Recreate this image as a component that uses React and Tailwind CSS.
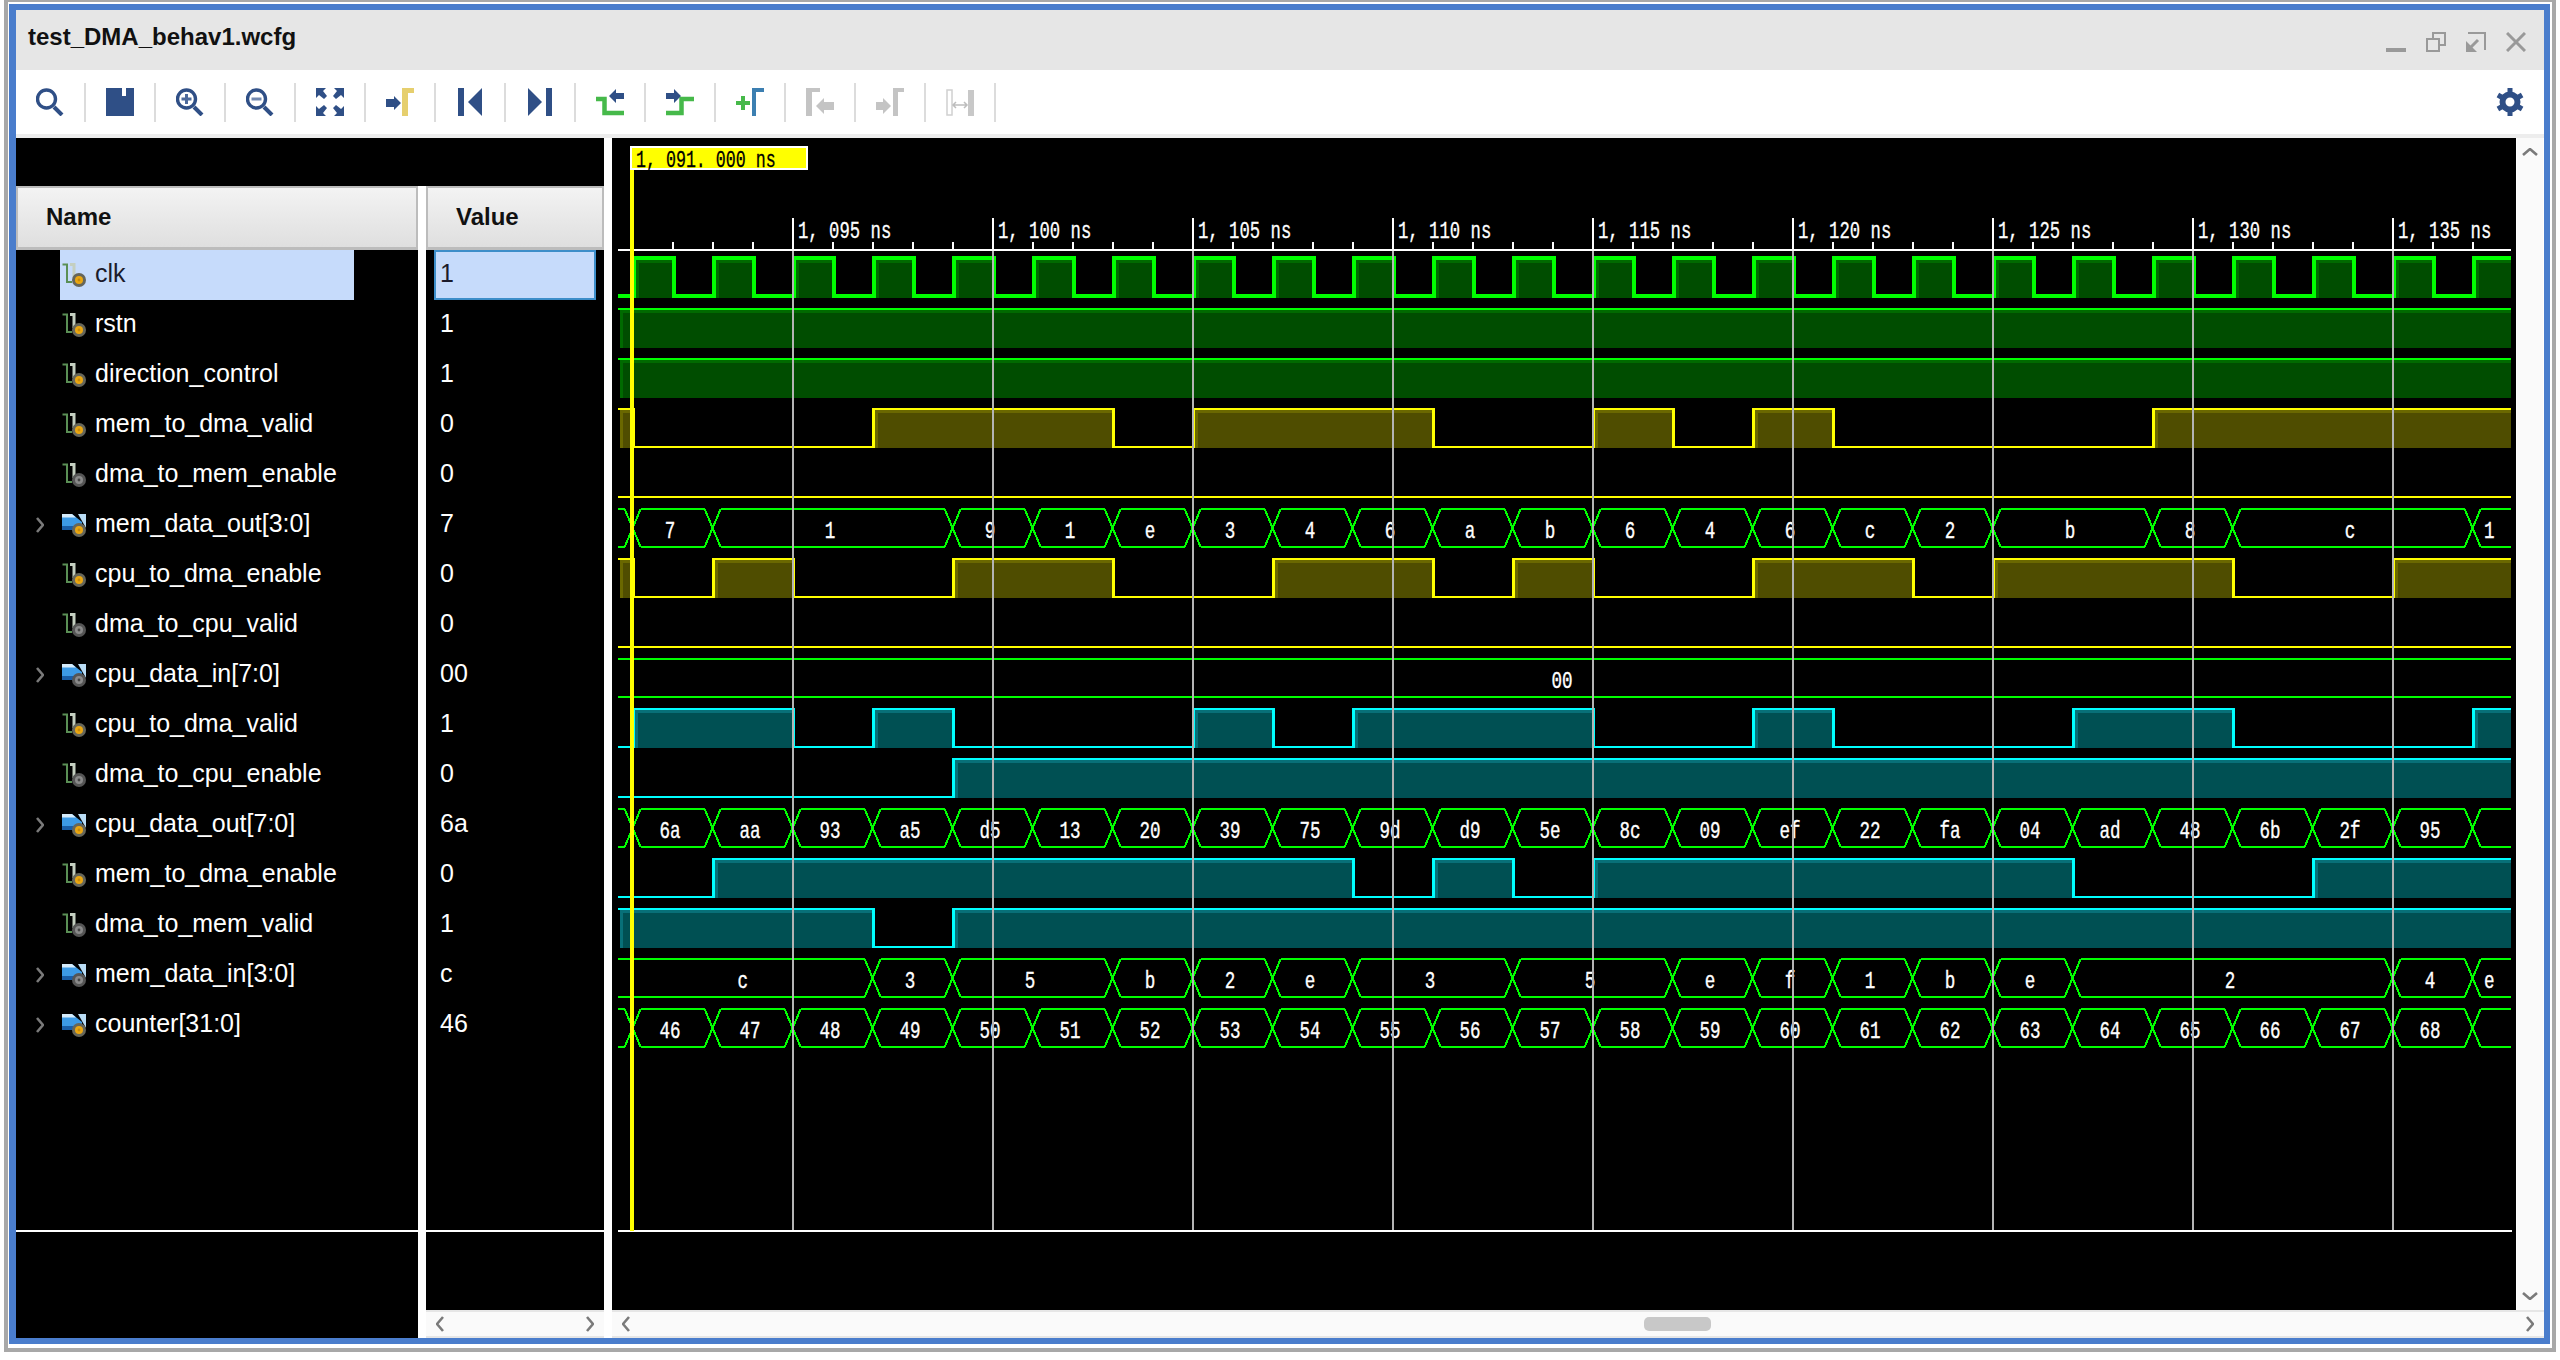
import React from "react";

const SIGNALS = [
  { name: "clk", value: "1", selected: true },
  { name: "rstn", value: "1" },
  { name: "direction_control", value: "1" },
  { name: "mem_to_dma_valid", value: "0" },
  { name: "dma_to_mem_enable", value: "0", dim: true },
  { name: "mem_data_out[3:0]", value: "7", bus: true },
  { name: "cpu_to_dma_enable", value: "0" },
  { name: "dma_to_cpu_valid", value: "0", dim: true },
  { name: "cpu_data_in[7:0]", value: "00", bus: true, dim: true },
  { name: "cpu_to_dma_valid", value: "1" },
  { name: "dma_to_cpu_enable", value: "0", dim: true },
  { name: "cpu_data_out[7:0]", value: "6a", bus: true },
  { name: "mem_to_dma_enable", value: "0" },
  { name: "dma_to_mem_valid", value: "1", dim: true },
  { name: "mem_data_in[3:0]", value: "c", bus: true, dim: true },
  { name: "counter[31:0]", value: "46", bus: true },
];

const GREEN = { line: "#00ff00", fill: "#004d00", band: "#006a00" };
const YELLOW = { line: "#ffff00", fill: "#4f4d00", band: "#6a6800" };
const TEAL = { line: "#00ffff", fill: "#005053", band: "#087078" };

const clkEdges = [];
for (let k = 0; k <= 46; k++) clkEdges.push(k / 2);

const WAVES = [
  { color: GREEN, high: false, edges: clkEdges, thick: true },
  { color: GREEN, high: true, edges: [] },
  { color: GREEN, high: true, edges: [] },
  { color: YELLOW, high: true, edges: [0, 3, 6, 7, 10, 12, 13, 14, 15, 19] },
  { color: YELLOW, high: false, edges: [] },
  {
    bus: true,
    init: "",
    edges: [0, 1, 4, 5, 6, 7, 8, 9, 10, 11, 12, 13, 14, 15, 16, 17, 19, 20, 23],
    labels: ["7", "1", "9", "1", "e", "3", "4", "6", "a", "b", "6", "4", "6", "c", "2", "b", "8", "c", "1"],
  },
  { color: YELLOW, high: true, edges: [0, 1, 2, 4, 6, 8, 10, 11, 12, 14, 16, 17, 20, 22] },
  { color: YELLOW, high: false, edges: [] },
  { bus: true, init: "00", edges: [], labels: [] },
  { color: TEAL, high: false, edges: [0, 2, 3, 4, 7, 8, 9, 12, 14, 15, 18, 20, 23] },
  { color: TEAL, high: false, edges: [4] },
  {
    bus: true,
    init: "",
    edges: [0, 1, 2, 3, 4, 5, 6, 7, 8, 9, 10, 11, 12, 13, 14, 15, 16, 17, 18, 19, 20, 21, 22, 23],
    labels: ["6a", "aa", "93", "a5", "d5", "13", "20", "39", "75", "9d", "d9", "5e", "8c", "09", "ef", "22", "fa", "04", "ad", "48", "6b", "2f", "95", ""],
  },
  { color: TEAL, high: false, edges: [1, 9, 10, 11, 12, 18, 21] },
  { color: TEAL, high: true, edges: [3, 4] },
  {
    bus: true,
    init: "c",
    edges: [3, 4, 6, 7, 8, 9, 11, 13, 14, 15, 16, 17, 18, 22, 23],
    labels: ["3", "5", "b", "2", "e", "3", "5", "e", "f", "1", "b", "e", "2", "4", "e"],
  },
  {
    bus: true,
    init: "",
    edges: [0, 1, 2, 3, 4, 5, 6, 7, 8, 9, 10, 11, 12, 13, 14, 15, 16, 17, 18, 19, 20, 21, 22, 23],
    labels: ["46", "47", "48", "49", "50", "51", "52", "53", "54", "55", "56", "57", "58", "59", "60", "61", "62", "63", "64", "65", "66", "67", "68", ""],
  },
];

const X_START = 618;
const X_END = 2511;
const MAJOR = [0, 1, 2, 3, 4, 5, 6, 7, 8].map((n) => 792 + n * 200);

function DigitalWave({ row, wave }) {
  const { color, edges, thick } = wave;
  const h = thick ? 4 : 2;
  const v = thick ? 4 : 3;
  const top = thick ? 256 : 258 + row * 50;
  const low = thick ? 294 : 296 + row * 50;
  const bottom = low + h;
  const xs = [X_START, ...edges.map((k) => 632 + k * 80), X_END];
  const parts = [];
  let high = wave.high;
  for (let i = 0; i < xs.length - 1; i++) {
    const x0 = xs[i];
    const x1 = xs[i + 1];
    if (high) {
      const start = i === 0 ? x0 + 2 : x0 + v;
      parts.push(<rect key={`f${i}`} x={start} y={top + h} width={Math.max(x1 - start, 0)} height={bottom - top - h} fill={color.fill} />);
      parts.push(<rect key={`b${i}`} x={start} y={top + h} width={Math.max(x1 - start, 0)} height={3} fill={color.band} />);
      parts.push(<rect key={`l${i}`} x={start} y={top + h} width={3} height={bottom - top - h} fill={color.band} />);
    }
    parts.push(<rect key={`h${i}`} x={x0} y={high ? top : low} width={x1 - x0} height={h} fill={color.line} />);
    if (i < xs.length - 2) {
      parts.push(<rect key={`v${i}`} x={x1} y={top} width={v} height={bottom - top} fill={color.line} />);
    }
    high = !high;
  }
  return <g>{parts}</g>;
}

function BusWave({ row, wave }) {
  const top = 259 + row * 50;
  const bot = 297 + row * 50;
  const xs = wave.edges.map((k) => 632.6 + k * 80);
  let d = "";
  let cursor = X_START;
  xs.forEach((xc) => {
    d += `M${cursor} ${top}H${xc - 8}L${xc + 8} ${bot}M${cursor} ${bot}H${xc - 8}L${xc + 8} ${top}`;
    cursor = xc + 8;
  });
  d += `M${cursor} ${top}H${X_END}M${cursor} ${bot}H${X_END}`;
  const bounds = [X_START, ...xs, X_END];
  const labels = [wave.init, ...wave.labels];
  return (
    <g>
      <path d={d} fill="none" stroke="#00ff00" strokeWidth="2" shapeRendering="crispEdges" />
      {labels.map((label, i) =>
        label ? (
          <text key={i} transform={`translate(${(bounds[i] + bounds[i + 1]) / 2 - 2.5},${288 + row * 50}) scale(1.1,1.5)`} textAnchor="middle" fill="#fff" stroke="#fff" strokeWidth="0.25">
            {label}
          </text>
        ) : null
      )}
    </g>
  );
}

function Waveform() {
  const minors = [];
  for (let x = 672; x < X_END; x += 40) {
    if (!MAJOR.includes(x)) minors.push(x);
  }
  return (
    <svg viewBox="612 138 1904 1172" className="w-[1904px] h-[1172px] block font-['Liberation_Mono'] text-[16px]">
      {WAVES.map((w, i) => (w.bus ? <BusWave key={i} row={i} wave={w} /> : <DigitalWave key={i} row={i} wave={w} />))}
      {/* ruler */}
      <rect x={X_START} y="249" width={X_END - X_START} height="2" fill="#fff" />
      {minors.map((x) => (
        <rect key={x} x={x} y="242" width="2" height="8" fill="#fff" />
      ))}
      {MAJOR.map((x, n) => (
        <g key={x}>
          <rect x={x} y="218" width="2" height="32" fill="#fff" />
          <rect x={x} y="251" width="2" height="980" fill="#b4b4b4" />
          <text transform={`translate(${x + 6},238) scale(1.08,1.55)`} fill="#fff" stroke="#fff" strokeWidth="0.2">{`1, ${String(95 + n * 5).padStart(3, "0")} ns`}</text>
        </g>
      ))}
      <rect x={X_START} y="1230" width={X_END - X_START + 1} height="2" fill="#fff" />
      {/* cursor */}
      <rect x="630" y="168" width="4" height="1063" fill="#ffff00" />
      <rect x="630" y="146" width="178" height="24" fill="#fff" />
      <rect x="632" y="148" width="174" height="20" fill="#ffff00" />
      <text transform="translate(636,167) scale(1.04,1.45)" fill="#000" stroke="#000" strokeWidth="0.2">1, 091. 000 ns</text>
    </svg>
  );
}

const NAVY = "#2f4f86";

function Magnifier({ sign }) {
  return (
    <svg viewBox="0 0 28 28" className="w-7 h-7">
      <circle cx="10.5" cy="11" r="9" fill="none" stroke={NAVY} strokeWidth="3.4" />
      <path d="M18 19L26 27" stroke={NAVY} strokeWidth="4" />
      {sign === "plus" && <path d="M5.5 11H15.5M10.5 6V16" stroke="#4d6a9c" strokeWidth="3" />}
      {sign === "minus" && <path d="M5.5 11H15.5" stroke="#7188b0" strokeWidth="3" />}
    </svg>
  );
}

const TOOL_ICONS = [
  <Magnifier />,
  <svg viewBox="0 0 28 28" className="w-7 h-7">
    <path d="M0 0H28V28H0Z" fill={NAVY} />
    <rect x="16" y="0" width="4" height="8" fill="#fff" />
  </svg>,
  <Magnifier sign="plus" />,
  <Magnifier sign="minus" />,
  <svg viewBox="0 0 28 28" className="w-7 h-7" fill={NAVY}>
    <path d="M0 0H10L7 3L11 8L8 11L3 7L0 10Z" />
    <path d="M28 0H18L21 3L17 8L20 11L25 7L28 10Z" />
    <path d="M0 28H10L7 25L11 20L8 17L3 21L0 18Z" />
    <path d="M28 28H18L21 25L17 20L20 17L25 21L28 18Z" />
  </svg>,
  <svg viewBox="0 0 28 28" className="w-7 h-7">
    <path d="M0 11H8V8L15 15L8 22V19H0Z" fill={NAVY} />
    <path d="M16 28V0H28V5H22V28Z" fill="#e6cf6e" />
  </svg>,
  <svg viewBox="0 0 28 28" className="w-7 h-7" fill={NAVY}>
    <rect x="2" y="0" width="6" height="28" />
    <path d="M12 14L26 0V28Z" />
  </svg>,
  <svg viewBox="0 0 28 28" className="w-7 h-7" fill={NAVY}>
    <path d="M16 14L2 0V28Z" />
    <rect x="20" y="0" width="6" height="28" />
  </svg>,
  <svg viewBox="0 0 28 28" className="w-7 h-7">
    <path d="M0 11H8.5V25H28" fill="none" stroke="#46b94a" strokeWidth="4.5" />
    <path d="M28 5H20V1L13 8L20 15V11H28Z" fill={NAVY} />
  </svg>,
  <svg viewBox="0 0 28 28" className="w-7 h-7">
    <path d="M0 25H15.5V11H28" fill="none" stroke="#46b94a" strokeWidth="4.5" />
    <path d="M0 5H8V1L15 8L8 15V11H0Z" fill={NAVY} />
  </svg>,
  <svg viewBox="0 0 28 28" className="w-7 h-7">
    <path d="M0 15H14M7 8V22" stroke="#46b94a" strokeWidth="4" />
    <path d="M16 28V0H28V4H20V28Z" fill="#3c7fb1" />
  </svg>,
  <svg viewBox="0 0 28 28" className="w-7 h-7" fill="#c4c4c4">
    <path d="M0 28V0H14V4H6V28Z" />
    <path d="M28 14H18V10L10 18L18 26V22H28Z" />
  </svg>,
  <svg viewBox="0 0 28 28" className="w-7 h-7" fill="#c4c4c4">
    <path d="M0 14H7V10L15 18L7 26V22H0Z" />
    <path d="M17 28V0H28V4H22V28Z" />
  </svg>,
  <svg viewBox="0 0 28 28" className="w-7 h-7">
    <rect x="1" y="2" width="5" height="25" fill="none" stroke="#d0d0d0" strokeWidth="1.5" />
    <rect x="22" y="2" width="6" height="26" fill="#c8c8c8" />
    <path d="M7 17H21M10 14L7 17L10 20M18 14L21 17L18 20" fill="none" stroke="#bdbdbd" strokeWidth="1.5" />
  </svg>,
];

function Gear() {
  return (
    <svg viewBox="0 0 28 28" className="w-7 h-7">
      <circle cx="14" cy="14" r="7.5" fill="none" stroke={NAVY} strokeWidth="6" />
      <path d="M14 0V6M14 22V28M1.9 7L7 10M21 18L26.1 21M1.9 21L7 18M21 10L26.1 7" stroke={NAVY} strokeWidth="5" />
    </svg>
  );
}

function SignalIcon({ bus, dim }) {
  return (
    <svg viewBox="0 0 24 24" className="w-6 h-6 shrink-0">
      {bus ? (
        <g>
          <path d="M0 1H10L20 9V14L12 17H0Z" fill="#3d9be6" />
          <path d="M0 1H10L14 4.5H0Z" fill="#d5ecfb" />
          <path d="M0 13H13V17H0Z" fill="#1a5fa8" />
          <path d="M16 1H24V15Z" fill="#b9dcf5" />
        </g>
      ) : (
        <g fill="none">
          <path d="M0.5 1.5H5V19H10" stroke="#5a8f55" strokeWidth="2" />
          <path d="M8 1.5H12V15" stroke="#c4cfc0" strokeWidth="3" />
        </g>
      )}
      <circle cx="17" cy="17" r="7" fill={dim ? "#555" : "#66665a"} />
      <circle cx="17" cy="17" r="4" fill={dim ? "#8a8a8a" : "#eaa711"} />
      <circle cx="17" cy="17" r="1.4" fill={dim ? "#444" : "#c98a08"} />
    </svg>
  );
}

function Chevron({ dir, className }) {
  const paths = { left: "M7 1L1 8L7 15", right: "M1 1L7 8L1 15", up: "M1 7L8 1L15 7", down: "M1 1L8 7L15 1" };
  const box = dir === "up" || dir === "down" ? "0 0 16 8" : "0 0 8 16";
  return (
    <svg viewBox={box} className={className}>
      <path d={paths[dir]} fill="none" stroke="#7a7a7a" strokeWidth="2.6" />
    </svg>
  );
}

function ColumnHeader({ label }) {
  return (
    <div className="h-16 border-2 border-b-[3px] border-[#bcbcbc] bg-linear-to-b from-[#f3f3f3] to-[#dfdfdf] flex items-center pl-[28px] text-[24px] font-bold text-[#111] pb-[2px]">
      {label}
    </div>
  );
}

export default function App() {
  return (
    <div className="w-[2560px] h-[1360px] bg-white pl-1 pr-1 pb-2 font-['Liberation_Sans',sans-serif]">
      <div className="h-full bg-[#a8a8a8] pl-1 pr-1 pt-[2px] pb-1">
        <div className="h-full bg-white pl-[1px] pr-[2px] pt-[2px] pb-1">
          <div className="h-full border-[6px] border-l-[7px] border-[#4a7dcc] flex flex-col bg-white">
            {/* title bar */}
            <div className="h-[60px] bg-[#e6e6e6] flex items-center pl-3 pr-[18px] shrink-0">
              <span className="text-[24px] font-bold text-[#111] pb-[6px]">test_DMA_behav1.wcfg</span>
              <div className="ml-auto flex gap-5 mt-1">
                <svg viewBox="0 0 20 20" className="w-5 h-5">
                  <rect x="0" y="16" width="20" height="4" fill="#999" />
                </svg>
                <svg viewBox="0 0 20 20" className="w-5 h-5" fill="none" stroke="#999" strokeWidth="2">
                  <rect x="1" y="7" width="12" height="12" />
                  <path d="M7 6V1H19V13H14" />
                </svg>
                <svg viewBox="0 0 20 20" className="w-5 h-5" fill="none" stroke="#999" strokeWidth="2">
                  <path d="M2 1H19V18" />
                  <path d="M12 8L4 16" strokeWidth="3" />
                  <path d="M0 9V20H11Z" fill="#999" stroke="none" />
                </svg>
                <svg viewBox="0 0 20 20" className="w-5 h-5" fill="none" stroke="#999" strokeWidth="3">
                  <path d="M1 1L19 19M19 1L1 19" />
                </svg>
              </div>
            </div>

            {/* toolbar */}
            <div className="h-[68px] bg-white border-b-4 border-[#ededed] flex items-center shrink-0 pr-5">
              {TOOL_ICONS.map((icon, i) => (
                <React.Fragment key={i}>
                  <div className="w-[68px] flex items-center justify-center">{icon}</div>
                  <div className="w-[2px] h-[39px] bg-[#dcdcdc]"></div>
                </React.Fragment>
              ))}
              <div className="ml-auto">
                <Gear />
              </div>
            </div>

            <div className="flex-1 flex min-h-0">
              <div className="w-[588px] flex flex-col shrink-0">
                <div className="h-12 bg-black shrink-0"></div>
                <div className="flex-1 flex min-h-0">
                  {/* names */}
                  <div className="w-[402px] bg-black flex flex-col">
                    <ColumnHeader label="Name" />
                    <div className="h-[980px]">
                      {SIGNALS.map((s) => (
                        <div key={s.name} className="h-[50px] flex items-center">
                          <div className="w-11 pl-5">{s.bus && <Chevron dir="right" className="w-2 h-4" />}</div>
                          <div className={`w-[294px] h-[50px] flex items-center pl-[2px] ${s.selected ? "bg-[#c6dbfb] text-[#1b1b2b]" : "text-white"}`}>
                            <SignalIcon bus={s.bus} dim={s.dim} />
                            <span className="ml-[9px] text-[25px] pb-[2px] whitespace-nowrap">{s.name}</span>
                          </div>
                        </div>
                      ))}
                    </div>
                    <div className="h-[2px] bg-white"></div>
                  </div>
                  <div className="w-2 bg-white"></div>

                  {/* values */}
                  <div className="w-[178px] bg-black flex flex-col">
                    <ColumnHeader label="Value" />
                    <div className="h-[980px]">
                      {SIGNALS.map((s) => (
                        <div key={s.name} className="h-[50px] px-2">
                          <div className={`h-[50px] flex items-center pl-1 pb-[2px] text-[25px] border-2 ${s.selected ? "bg-[#c6dbfb] border-[#3d8ec9] text-[#1b1b2b]" : "border-transparent text-white"}`}>
                            {s.value}
                          </div>
                        </div>
                      ))}
                    </div>
                    <div className="h-[2px] bg-white"></div>
                    <div className="flex-1"></div>
                    <div className="h-7 bg-[#fafafa] border-t-2 border-b-2 border-[#e6e6e6] flex items-center justify-between px-[10px]">
                      <Chevron dir="left" className="w-2 h-4" />
                      <Chevron dir="right" className="w-2 h-4" />
                    </div>
                  </div>
                </div>
              </div>
              <div className="w-2 bg-white"></div>

              {/* waveform */}
              <div className="flex-1 flex flex-col min-w-0">
                <div className="h-[1172px] flex">
                  <div className="w-[1904px] bg-black">
                    <Waveform />
                  </div>
                  <div className="flex-1 ml-[1px] mr-[1px] bg-[#fafafa] flex flex-col items-center justify-between pt-[10px] pb-[10px]">
                    <Chevron dir="up" className="w-4 h-2" />
                    <Chevron dir="down" className="w-4 h-2" />
                  </div>
                </div>
                <div className="h-7 bg-[#fafafa] border-t-2 border-b-2 border-[#e6e6e6] flex items-center px-[10px]">
                  <Chevron dir="left" className="w-2 h-4" />
                  <div className="ml-[1014px] w-[67px] h-[14px] rounded-[5px] bg-[#c8c8c8]"></div>
                  <Chevron dir="right" className="w-2 h-4 ml-auto" />
                </div>
              </div>
            </div>
          </div>
        </div>
      </div>
    </div>
  );
}
